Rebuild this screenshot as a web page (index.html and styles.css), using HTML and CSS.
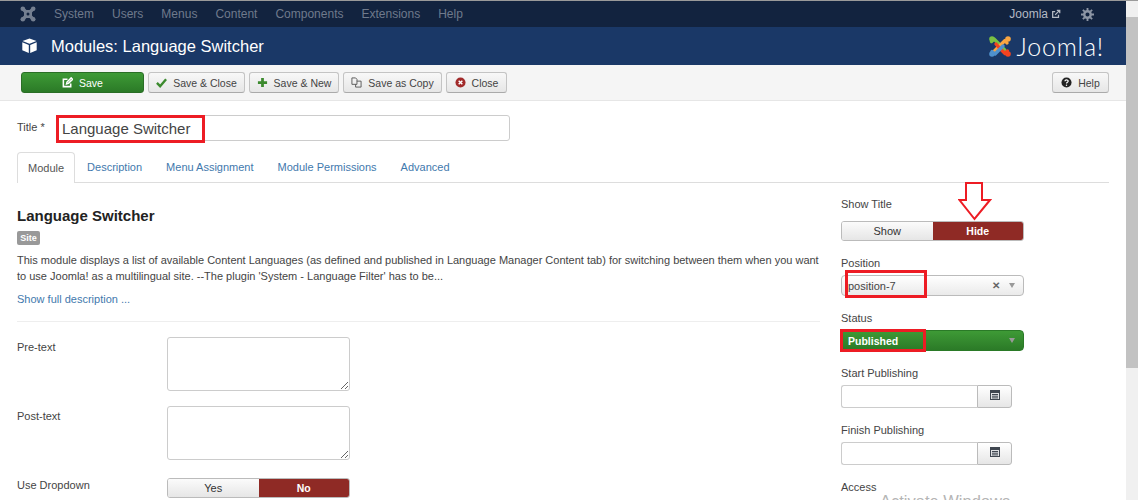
FILE: index.html
```html
<!DOCTYPE html>
<html lang="en">
<head>
    <meta charset="UTF-8">
    <title>Modules: Language Switcher</title>
    <link rel="stylesheet" href="styles.css">
</head>
<body>
    <div class="page">
        <div class="content">
            <nav class="navbar">
                <svg class="nav-logo" viewBox="0 0 16 16" width="16" height="16"><path d="M3 3 13 13M13 3 3 13" stroke="#747f90" stroke-width="3.400" stroke-linecap="round"/><path d="M5 5h6v6H5z" fill="none" stroke="#747f90" stroke-width="2"/><circle cx="2.800" cy="2.800" r="2.300" fill="#747f90"/><circle cx="13.200" cy="2.800" r="2.300" fill="#747f90"/><circle cx="2.800" cy="13.200" r="2.300" fill="#747f90"/><circle cx="13.200" cy="13.200" r="2.300" fill="#747f90"/><circle cx="8" cy="8" r="1.500" fill="#12233f"/></svg>
                <ul class="nav-menu">
                    <li>System</li>
                    <li>Users</li>
                    <li>Menus</li>
                    <li>Content</li>
                    <li>Components</li>
                    <li>Extensions</li>
                    <li>Help</li>
                </ul>
                <div class="nav-right">
                    <span>Joomla</span>
                    <svg viewBox="0 0 12 12" width="10" height="10"><path d="M9 7v3H2V3h3M5 7l5-5M7 1.500h3.500V5" fill="none" stroke="#b4bac4" stroke-width="1.500"/></svg>
                    <svg class="gear" viewBox="0 0 14 14" width="13" height="13"><circle cx="7" cy="7" r="3.500" fill="none" stroke="#8d96a5" stroke-width="2.600"/><path d="M7 0v3M7 11v3M0 7h3M11 7h3M2 2l2 2M10 10l2 2M12 2l-2 2M4 10l-2 2" stroke="#8d96a5" stroke-width="2"/></svg>
                </div>
            </nav>

            <header class="titlebar">
                <svg class="cube" viewBox="0 0 16 16" width="17" height="16"><path d="M8 .5 15 3 8 5.800 1 3zM.8 4.200l6.500 2.700V15L.8 12.300zM15.200 4.200 8.700 6.900V15l6.500-2.700z" fill="#fff"/></svg>
                <h1>Modules: Language Switcher</h1>
                <div class="brand">
                    <svg viewBox="0 0 24 23" width="24" height="23">
                        <path d="M3.500 6.500 6 4 13 11 17 15.500" fill="none" stroke="#7ac143" stroke-width="3.400" stroke-linecap="round" stroke-linejoin="round"/>
                        <circle cx="4" cy="4" r="2.800" fill="#7ac143"/>
                        <path d="M6 16.500 11 11.500 17 5.500 19 8" fill="none" stroke="#f9a541" stroke-width="3.400" stroke-linecap="round" stroke-linejoin="round"/>
                        <circle cx="20" cy="4" r="2.800" fill="#f9a541"/>
                        <path d="M19.500 16 17 18.500 11 12.500 8 9" fill="none" stroke="#f44321" stroke-width="3.400" stroke-linecap="round" stroke-linejoin="round"/>
                        <circle cx="20" cy="19" r="2.800" fill="#f44321"/>
                        <path d="M4 16.500 7 19 12 14 15 11" fill="none" stroke="#5091cd" stroke-width="3.400" stroke-linecap="round" stroke-linejoin="round"/>
                        <circle cx="4" cy="19" r="2.800" fill="#5091cd"/>
                    </svg>
                    <span class="brand-name">Joomla!</span>
                </div>
            </header>

            <div class="toolbar">
                <button class="btn btn-save">
                    <svg viewBox="0 0 12 12" width="11" height="11"><path d="M9.500 7v3.500h-8v-8H6M5 7.500l.5-2L10 1l1.500 1.500L7 7z" fill="none" stroke="#fff" stroke-width="1.700"/></svg>
                    Save
                </button>
                <button class="btn btn-saveclose">
                    <svg viewBox="0 0 12 12" width="11" height="11"><path d="M1 6.500 4.500 10 11 2.500" fill="none" stroke="#3c8a2e" stroke-width="2.600"/></svg>
                    Save &amp; Close
                </button>
                <button class="btn btn-savenew">
                    <svg viewBox="0 0 12 12" width="11" height="11"><path d="M6 1v10M1 6h10" stroke="#3c8a2e" stroke-width="3"/></svg>
                    Save &amp; New
                </button>
                <button class="btn btn-copy">
                    <svg viewBox="0 0 12 12" width="11" height="11"><path d="M1 1h4l1.500 1.500V8H1zM6.500 4.500H11V11H5V8" fill="none" stroke="#555" stroke-width="1"/></svg>
                    Save as Copy
                </button>
                <button class="btn btn-close">
                    <svg viewBox="0 0 12 12" width="11" height="11"><circle cx="6" cy="6" r="5.500" fill="#a12a2a"/><path d="M4 4l4 4M8 4l-4 4" stroke="#fff" stroke-width="1.600"/></svg>
                    Close
                </button>
                <button class="btn btn-help">
                    <svg viewBox="0 0 12 12" width="11" height="11"><circle cx="6" cy="6" r="5.500" fill="#222"/><path d="M4.300 4.600C4.300 2.800 7.800 2.800 7.800 4.500 7.800 5.700 6 5.600 6 7" fill="none" stroke="#fff" stroke-width="1.300"/><circle cx="6" cy="9" r=".8" fill="#fff"/></svg>
                    Help
                </button>
            </div>

            <main class="form">
                <div class="title-row">
                    <label>Title *</label>
                    <input class="title-input" type="text" value="Language Switcher">
                </div>

                <ul class="tabs">
                    <li class="active">Module</li>
                    <li>Description</li>
                    <li>Menu Assignment</li>
                    <li>Module Permissions</li>
                    <li>Advanced</li>
                </ul>

                <div class="columns">
                    <section class="main-col">
                        <h2>Language Switcher</h2>
                        <span class="badge">Site</span>
                        <p class="desc">This module displays a list of available Content Languages (as defined and published in Language Manager Content tab) for switching between them when you want to use Joomla! as a multilingual site. --The plugin 'System - Language Filter' has to be...</p>
                        <a class="more">Show full description ...</a>
                        <hr>
                        <div class="field field-area">
                            <label>Pre-text</label>
                            <textarea></textarea>
                        </div>
                        <div class="field field-area">
                            <label>Post-text</label>
                            <textarea></textarea>
                        </div>
                        <div class="field field-toggle">
                            <label>Use Dropdown</label>
                            <div class="toggle">
                                <span>Yes</span>
                                <span class="on">No</span>
                            </div>
                        </div>
                    </section>

                    <aside class="side-col">
                        <label>Show Title</label>
                        <div class="toggle">
                            <span>Show</span>
                            <span class="on">Hide</span>
                        </div>
                        <label>Position</label>
                        <div class="select">
                            <span>position-7</span>
                            <b class="clear">&#10005;</b>
                            <i class="caret"></i>
                        </div>
                        <label>Status</label>
                        <div class="select select-green">
                            <span>Published</span>
                            <i class="caret"></i>
                        </div>
                        <label>Start Publishing</label>
                        <div class="date">
                            <input type="text">
                            <button>
                                <svg viewBox="0 0 12 12" width="12" height="12"><path d="M1 1h10v10H1z" fill="#3f4650"/><path d="M2 4h8v6H2z" fill="#dfe1e4"/><path d="M3 5.500h6M3 7.200h6M3 8.900h6" stroke="#3f4650"/></svg>
                            </button>
                        </div>
                        <label>Finish Publishing</label>
                        <div class="date">
                            <input type="text">
                            <button>
                                <svg viewBox="0 0 12 12" width="12" height="12"><path d="M1 1h10v10H1z" fill="#3f4650"/><path d="M2 4h8v6H2z" fill="#dfe1e4"/><path d="M3 5.500h6M3 7.200h6M3 8.900h6" stroke="#3f4650"/></svg>
                            </button>
                        </div>
                        <label>Access</label>
                    </aside>
                </div>
            </main>
        </div>

        <div class="scrollbar">
            <div class="scroll-up"></div>
            <div class="scroll-thumb"></div>
        </div>
    </div>

    <!-- annotations drawn on top of the screenshot -->
    <div class="mark mark-title"></div>
    <div class="mark mark-position"></div>
    <div class="mark mark-status"></div>
    <svg class="mark-arrow" viewBox="0 0 34 39" width="34" height="39"><path d="M8 1h16v17h8L16.500 37 1.500 18H8z" fill="#fff" stroke="#ed1c24" stroke-width="2"/></svg>
    <div class="watermark">Activate Windows</div>
</body>
</html>
```

FILE: styles.css
```css
* {
    margin: 0;
    padding: 0;
    box-sizing: border-box;
}

html, body {
    height: 500px;
    overflow: hidden;
}

body {
    position: relative;
    font-family: "Liberation Sans", Arial, sans-serif;
    font-size: 11px;
    color: #333;
    background: #fff;
}

.page {
    display: flex;
    height: 500px;
    border-top: 1px solid #9a9a9a;
}

.content {
    flex: 1;
    min-width: 0;
    overflow: hidden;
}

/* top bar */
.navbar {
    display: flex;
    align-items: center;
    height: 26px;
    padding-left: 20px;
    background: #12233f;
    color: #6f7a8c;
    font-size: 12px;
}

.nav-logo {
    margin-right: 10px;
}

.nav-menu {
    display: flex;
    list-style: none;
    gap: 18px;
    margin-left: 8px;
}

.nav-right {
    display: flex;
    align-items: center;
    margin-left: auto;
    padding-right: 32px;
    color: #b4bac4;
}

.nav-right svg {
    margin-left: 3px;
}

.nav-right .gear {
    margin-left: 20px;
}

/* title bar */
.titlebar {
    display: flex;
    align-items: center;
    height: 38px;
    padding-left: 21px;
    background: #1a3867;
    color: #fff;
}

.cube {
    margin-right: 13px;
}

.titlebar h1 {
    font-size: 16.5px;
    font-weight: 400;
}

.brand {
    display: flex;
    align-items: center;
    margin-left: auto;
    padding-right: 22px;
}

.brand-name {
    margin-left: 5px;
    font-family: Lato, "Liberation Sans", sans-serif;
    font-size: 25px;
    font-weight: 300;
    letter-spacing: 0.8px;
}

/* toolbar */
.toolbar {
    display: flex;
    gap: 4px;
    height: 36px;
    padding: 7px 17px 0 21px;
    background: #f5f5f5;
    border-bottom: 1px solid #e6e6e6;
}

.btn {
    display: flex;
    align-items: center;
    justify-content: center;
    gap: 6px;
    height: 21px;
    font: 10.5px "Liberation Sans", Arial, sans-serif;
    color: #444;
    background: linear-gradient(#f8f8f8, #e6e6e6);
    border: 1px solid #c4c4c4;
    border-bottom-color: #aaa;
    border-radius: 3px;
}

.btn-save {
    width: 123px;
    color: #fff;
    background: linear-gradient(#3e9a36, #2b7a27);
    border-color: #2a6e26;
}

.btn-saveclose { width: 97px; }
.btn-savenew { width: 90px; }
.btn-copy { width: 99px; }
.btn-close { width: 61px; }

.btn-help {
    width: 57px;
    margin-left: auto;
}

/* form */
.form {
    padding: 14px 17px 0;
}

label {
    display: block;
    color: #444;
}

.title-row {
    display: flex;
    align-items: center;
    height: 26px;
}

.title-row label {
    width: 39px;
    margin-top: -2px;
}

.title-input {
    width: 454px;
    height: 26px;
    padding: 0 5px;
    font: 15px "Liberation Sans", Arial, sans-serif;
    color: #444;
    border: 1px solid #ccc;
    border-radius: 3px;
}

.tabs {
    display: flex;
    list-style: none;
    margin-top: 11px;
    height: 31px;
    border-bottom: 1px solid #ddd;
}

.tabs li {
    padding: 9px 12px 0;
    color: #3f79ad;
}

.tabs li.active {
    padding: 9px 10px 0;
    color: #555;
    background: #fff;
    height: 31px;
    border: 1px solid #ddd;
    border-bottom: 0;
    border-radius: 4px 4px 0 0;
}

.columns {
    display: grid;
    grid-template-columns: 803px 183px;
    column-gap: 21px;
}

/* left column */
.main-col {
    padding-top: 25px;
}

.main-col h2 {
    font-size: 15px;
    line-height: 16px;
    color: #222;
}

.badge {
    display: block;
    width: 23px;
    height: 14px;
    margin-top: 7px;
    font-size: 9px;
    font-weight: 700;
    line-height: 14px;
    text-align: center;
    color: #fff;
    background: #999;
    border-radius: 2px;
}

.desc {
    margin-top: 7px;
    line-height: 16px;
    color: #444;
}

.more {
    display: block;
    margin-top: 7px;
    line-height: 16px;
    color: #3f79ad;
}

hr {
    margin-top: 14px;
    border: 0;
    border-top: 1px solid #eee;
}

.field {
    display: flex;
    margin-top: 15px;
}

.field label {
    width: 150px;
    padding-top: 4px;
}

.field-area {
    height: 54px;
}

textarea {
    display: block;
    width: 183px;
    height: 54px;
    border: 1px solid #ccc;
    border-radius: 3px;
}

.field-toggle {
    margin-top: 18px;
}

.field-toggle label {
    padding-top: 1px;
}

.toggle {
    display: flex;
    width: 183px;
    height: 20px;
    line-height: 18px;
    text-align: center;
    border: 1px solid #bbb;
    border-radius: 3px;
    overflow: hidden;
}

.toggle span {
    flex: 1;
    color: #333;
    background: linear-gradient(#fbfbfb, #e6e6e6);
}

.toggle .on {
    color: #fff;
    font-size: 10.5px;
    font-weight: 700;
    background: #8f2a25;
}

/* right column */
.side-col {
    padding-top: 15px;
}

.side-col label {
    height: 12px;
    line-height: 12px;
    margin: 16px 0 6px;
}

.side-col label:first-child {
    margin: 0 0 11px;
}

.select {
    display: flex;
    align-items: center;
    height: 21px;
    padding: 0 6px;
    color: #444;
    background: linear-gradient(#fff, #eaeaea);
    border: 1px solid #bbb;
    border-radius: 4px;
}

.select span {
    flex: 1;
}

.clear {
    margin-right: 9px;
    font-size: 10px;
    color: #666;
}

.caret {
    width: 0;
    height: 0;
    margin-right: 2px;
    border: 3px solid transparent;
    border-top: 5px solid #999;
    border-bottom: 0;
}

.select-green {
    color: #fff;
    font-size: 10.5px;
    font-weight: 700;
    background: linear-gradient(#3e9a36, #2b7a27);
    border-color: #2a7a27;
}

.date {
    display: flex;
    width: 171px;
    height: 23px;
}

.date input {
    width: 136px;
    border: 1px solid #ccc;
    border-right: 0;
    border-radius: 3px 0 0 3px;
}

.date button {
    flex: 1;
    background: linear-gradient(#fff, #e6e6e6);
    border: 1px solid #bbb;
    border-radius: 0 3px 3px 0;
}

/* scrollbar */
.scrollbar {
    flex: none;
    display: flex;
    flex-direction: column;
    width: 12px;
    background: #f0f0f0;
}

.scroll-up {
    height: 16px;
    background: #f0f0f0;
}

.scroll-thumb {
    height: 351px;
    background: #c2c2c2;
}

/* red annotations */
.mark {
    position: absolute;
    border: 3px solid #ed1c24;
}

.mark-title {
    left: 56px;
    top: 115px;
    width: 149px;
    height: 28px;
}

.mark-position {
    left: 845px;
    top: 270px;
    width: 82px;
    height: 28px;
}

.mark-status {
    left: 840px;
    top: 329px;
    width: 86px;
    height: 23px;
}

.mark-arrow {
    position: absolute;
    left: 958px;
    top: 182px;
}

.watermark {
    position: absolute;
    left: 880px;
    top: 492px;
    font-size: 16.5px;
    color: #b5b5b5;
}
```
